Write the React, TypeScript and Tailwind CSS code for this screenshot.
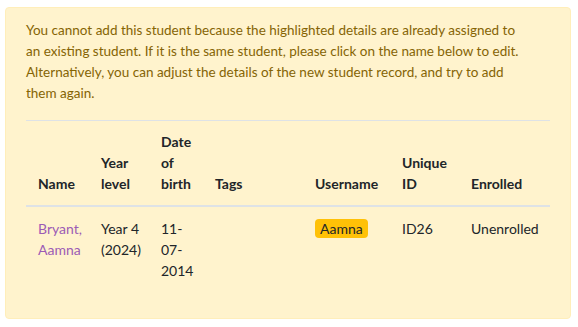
export default function App() {
  const font = { fontFamily: 'Lato, "Noto Sans", sans-serif' };
  const th = "border-t border-b-2 border-[#dee2e6] px-3 pt-[10px] pb-[11px]";
  const td = "px-3 pt-[11px] pb-3";
  return (
    <div className="min-h-screen bg-white pt-[7px] px-[5px]" style={font}>
      {/* Warning alert */}
      <div className="w-[566px] rounded-[4px] border border-[#ffeeba] bg-[#fff3cd] px-5 pt-3 pb-[25px] text-[14px] leading-[21px] text-[#856404]">
        <p className="mb-4 w-[495px] text-[13.5px]">
          You cannot add this student because the highlighted details are already assigned to
          an existing student. If it is the same student, please click on the name below to edit.
          Alternatively, you can adjust the details of the new student record, and try to add
          them again.
        </p>

        {/* Matching students */}
        <table className="w-[524px] table-fixed text-[#212529]">
          <thead>
            <tr className="align-bottom text-left font-bold">
              <th className={`w-[63px] ${th}`}>Name</th>
              <th className={`w-[60px] ${th}`}>Year level</th>
              <th className={`w-[54px] ${th}`}>Date of birth</th>
              <th className={`w-[100px] ${th}`}>Tags</th>
              <th className={`w-[87px] ${th}`}>Username</th>
              <th className={`w-[69px] ${th}`}>Unique ID</th>
              <th className={`w-[91px] ${th}`}>Enrolled</th>
            </tr>
          </thead>
          <tbody>
            <tr className="align-top">
              <td className={td}>
                <a href="#" className="text-[#9c5bb5]">Bryant, Aamna</a>
              </td>
              <td className={`${td} whitespace-nowrap`}>
                Year 4
                <br />
                (2024)
              </td>
              <td className={td}>11-07-2014</td>
              <td className={td}></td>
              <td className={td}>
                <span className="rounded-[4px] bg-[#ffc107] px-[5px] py-[1px]">Aamna</span>
              </td>
              <td className={td}>ID26</td>
              <td className={td}>Unenrolled</td>
            </tr>
          </tbody>
        </table>
      </div>
    </div>
  );
}
